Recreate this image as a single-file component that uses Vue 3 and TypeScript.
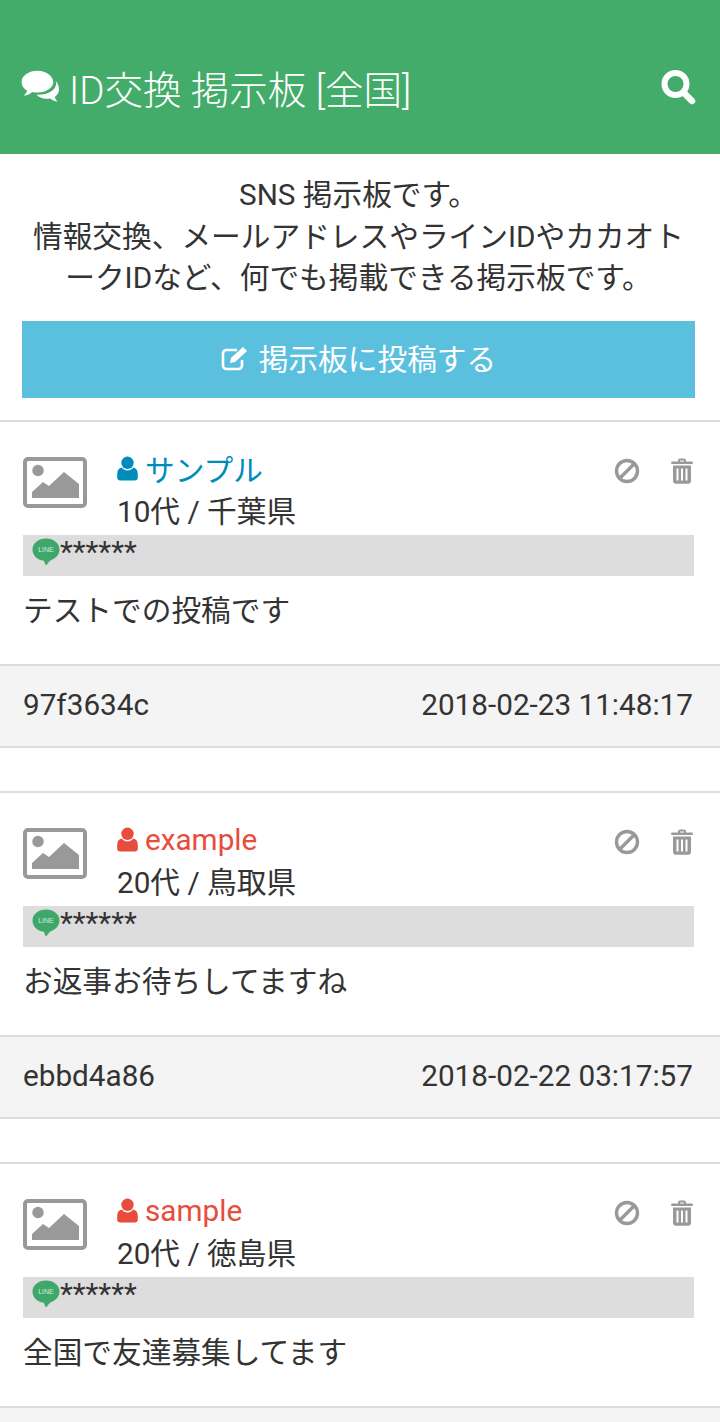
<template>
  <div class="page">
    <header class="top-bar">
      <h1 class="top-title">
        <svg class="chat-icon" viewBox="0 0 28 24" fill="currentColor">
          <path d="M11.500.500C5.300.500.300 4 .300 8.500c0 2.500 1.500 4.700 3.900 6.200-.4 1.300-1.200 2.400-2.400 3.500 2.500-.3 4.600-1.300 6.100-2.700 1.100.3 2.300.4 3.600.4 6.200 0 11.200-3.400 11.200-7.400S17.700.500 11.500.500z" />
          <path d="M24.300 7.600c.3.600.4 1.200.4 1.800 0 4.900-5.600 8.100-12.700 8.100h-1.300c1.900 1.900 4.600 2.800 7.500 2.800.8 0 1.600-.1 2.300-.2 1.300 1.100 3 1.900 5.200 2.200-1-1-1.700-2.100-2-3.200 1.700-1.300 3-3.100 3-5.300 0-2.600-1-4.700-2.400-6.200z" />
        </svg>
        ID交換 掲示板 [全国]
      </h1>
      <svg class="search-icon" viewBox="0 0 36 36" fill="none" stroke="currentColor" stroke-linecap="round">
        <circle cx="15.500" cy="15" r="11" stroke-width="6" />
        <path d="M24 24l8 8" stroke-width="6.500" />
      </svg>
    </header>

    <section class="intro">
      <p>SNS 掲示板です。<br />情報交換、メールアドレスやラインIDやカカオトークIDなど、何でも掲載できる掲示板です。</p>
      <button class="post-btn">
        <svg class="edit-icon" viewBox="0 0 28 26">
          <path d="M21 15v5.500a3.500 3.500 0 0 1-3.500 3.500H5.500A3.500 3.500 0 0 1 2 20.500V8.500A3.500 3.500 0 0 1 5.500 5H16" fill="none" stroke="currentColor" stroke-width="2.600" />
          <path d="M10 13L22 2l4 4-12 11-5 1z" fill="currentColor" />
        </svg>
        掲示板に投稿する
      </button>
    </section>

    <article v-for="post in posts" :key="post.name" class="post">
      <div class="post-body">
        <div class="post-head">
          <svg class="thumb" viewBox="0 0 64 52">
            <rect x="2" y="2" width="60" height="47" rx="3" fill="#fff" stroke="#999" stroke-width="4" />
            <circle cx="15" cy="13.500" r="5.700" fill="#999" />
            <path d="M9 41v-6l11-10 6 4 15-14 15 12v14z" fill="#999" />
          </svg>
          <div class="who">
            <div class="name" :class="post.gender">
              <svg class="user-icon" viewBox="0 0 22 26" fill="currentColor">
                <circle cx="11" cy="7" r="6.500" />
                <path d="M5 12c1.500 2 3.500 3 6 3s4.500-1 6-3c3 .5 4.800 3 4.800 7v3.500c0 2-1.300 3.200-3.200 3.200H3.400C1.500 25.700.2 24.500.2 22.500V19c0-4 1.800-6.500 4.800-7z" />
              </svg>
              <span>{{ post.name }}</span>
            </div>
            <div class="meta">{{ post.meta }}</div>
          </div>
          <div class="actions">
            <svg class="ban-icon" viewBox="0 0 26 26" fill="none" stroke="currentColor" stroke-width="3.400">
              <circle cx="13" cy="13" r="10.500" />
              <path d="M5.500 20.500l15-15" />
            </svg>
            <svg class="trash-icon" viewBox="0 0 24 26" fill="currentColor">
              <path d="M8 3.500V2.500C8 1.300 9 .5 10 .5h4c1 0 2 .8 2 2v1h5.500c.8 0 1.500.5 1.500 1.300S22.300 6 21.500 6H2.500C1.700 6 1 5.600 1 4.800s.7-1.300 1.500-1.300zM10 3.500h4V2.500h-4z" />
              <path fill-rule="evenodd" d="M3 7.500h18V23c0 1.600-1.200 2.800-2.800 2.800H5.800C4.200 25.800 3 24.600 3 23zM6.500 10.500v12h2v-12zM11 10.500v12h2v-12zM15.500 10.500v12h2v-12z" />
            </svg>
          </div>
        </div>
        <div class="id-bar">
          <svg class="line-icon" viewBox="0 0 28 28">
            <path d="M14 .5C6.500.5.500 5.200.500 11.500c0 6.300 5.500 10.700 10.500 11 .9.100 1.200.6 1.500 1.500.3 1.100.7 3 1.500 3s1.800-1.800 2.800-3c.7-.9 1.700-1.600 3-2.200 4.500-2 7.700-5.600 7.700-10.300C27.500 5.200 21.500.5 14 .5z" fill="#3fa76a" />
            <text x="14" y="14" text-anchor="middle" class="line-text">LINE</text>
          </svg>
          <span class="masked">******</span>
        </div>
        <p class="message">{{ post.message }}</p>
      </div>
      <footer class="post-foot">
        <span>{{ post.hash }}</span>
        <span>{{ post.date }}</span>
      </footer>
    </article>
  </div>
</template>

<script setup lang="ts">
interface Post {
  name: string;
  gender: 'male' | 'female';
  meta: string;
  message: string;
  hash: string;
  date: string;
}

// the third footer starts at the very bottom of the view, its text is below the fold
const posts: Post[] = [
  { name: 'サンプル', gender: 'male', meta: '10代 / 千葉県', message: 'テストでの投稿です', hash: '97f3634c', date: '2018-02-23 11:48:17' },
  { name: 'example', gender: 'female', meta: '20代 / 鳥取県', message: 'お返事お待ちしてますね', hash: 'ebbd4a86', date: '2018-02-22 03:17:57' },
  { name: 'sample', gender: 'female', meta: '20代 / 徳島県', message: '全国で友達募集してます', hash: '', date: '' },
];
</script>

<style>
html,
body {
  margin: 0;
  background: #fff;
}
</style>

<style scoped>
.page {
  height: 1422px;
  overflow: hidden;
  font-family: Roboto, "Noto Sans CJK JP", sans-serif;
  font-size: 29.700px;
  color: #333;
}

.top-bar {
  height: 154px;
  padding: 20px 24px 0 21px;
  box-sizing: border-box;
  background: #43ac6a;
  color: #fff;
  display: flex;
  align-items: center;
  justify-content: space-between;
}

.top-title {
  margin: 0;
  font-size: 38.500px;
  font-weight: 300;
  display: flex;
  align-items: center;
  gap: 8px;
}

.chat-icon {
  width: 40px;
  height: 34px;
}

.search-icon {
  width: 36px;
  height: 36px;
}

.intro {
  padding: 20px 25px 22px 22px;
  text-align: center;
  border-bottom: 2px solid #ddd;
}

.intro p {
  margin: 0 0 22px;
  padding: 0 8px;
  line-height: 41.500px;
}

.post-btn {
  width: 100%;
  height: 77px;
  border: none;
  padding: 0 0 3px;
  background: #5bc0de;
  color: #fff;
  font-family: inherit;
  font-size: 29.700px;
  display: flex;
  align-items: center;
  justify-content: center;
  gap: 10px;
}

.edit-icon {
  width: 28px;
  height: 26px;
}

.post {
  margin-bottom: 43px;
}

.post + .post {
  border-top: 2px solid #ddd;
}

.post-body {
  padding: 35px 26px 0 23px;
  height: 242px;
  box-sizing: border-box;
}

.post-head {
  display: flex;
  height: 78px;
}

.thumb {
  width: 64px;
  height: 52px;
  margin-right: 30px;
  flex-shrink: 0;
}

.who {
  flex: 1;
}

.name {
  display: flex;
  align-items: center;
  gap: 7px;
  height: 28px;
  margin: -2px 0 15px;
}

.name.male {
  color: #008cba;
}

.name.female {
  color: #e74c3c;
}

.user-icon {
  width: 21px;
  height: 25px;
}

.meta {
  line-height: 28px;
}

.actions {
  display: flex;
  gap: 30px;
  color: #999;
  height: 28px;
  align-items: center;
}

.ban-icon {
  width: 26px;
  height: 26px;
}

.trash-icon {
  width: 24px;
  height: 26px;
}

.id-bar {
  height: 41px;
  background: #ddd;
  display: flex;
  align-items: flex-start;
  padding: 3px 0 0 9px;
  box-sizing: border-box;
  line-height: 28px;
}

.line-icon {
  width: 28px;
  height: 28px;
}

.line-text {
  font-size: 7px;
  font-family: "Liberation Sans", sans-serif;
  fill: #cfeedd;
}

.message {
  margin: 18px 0 0;
  line-height: 34px;
}

.post-foot {
  height: 84px;
  box-sizing: border-box;
  border-top: 2px solid #ddd;
  border-bottom: 2px solid #ddd;
  background: #f4f4f4;
  padding: 0 27px 3px 23px;
  display: flex;
  align-items: center;
  justify-content: space-between;
}
</style>
